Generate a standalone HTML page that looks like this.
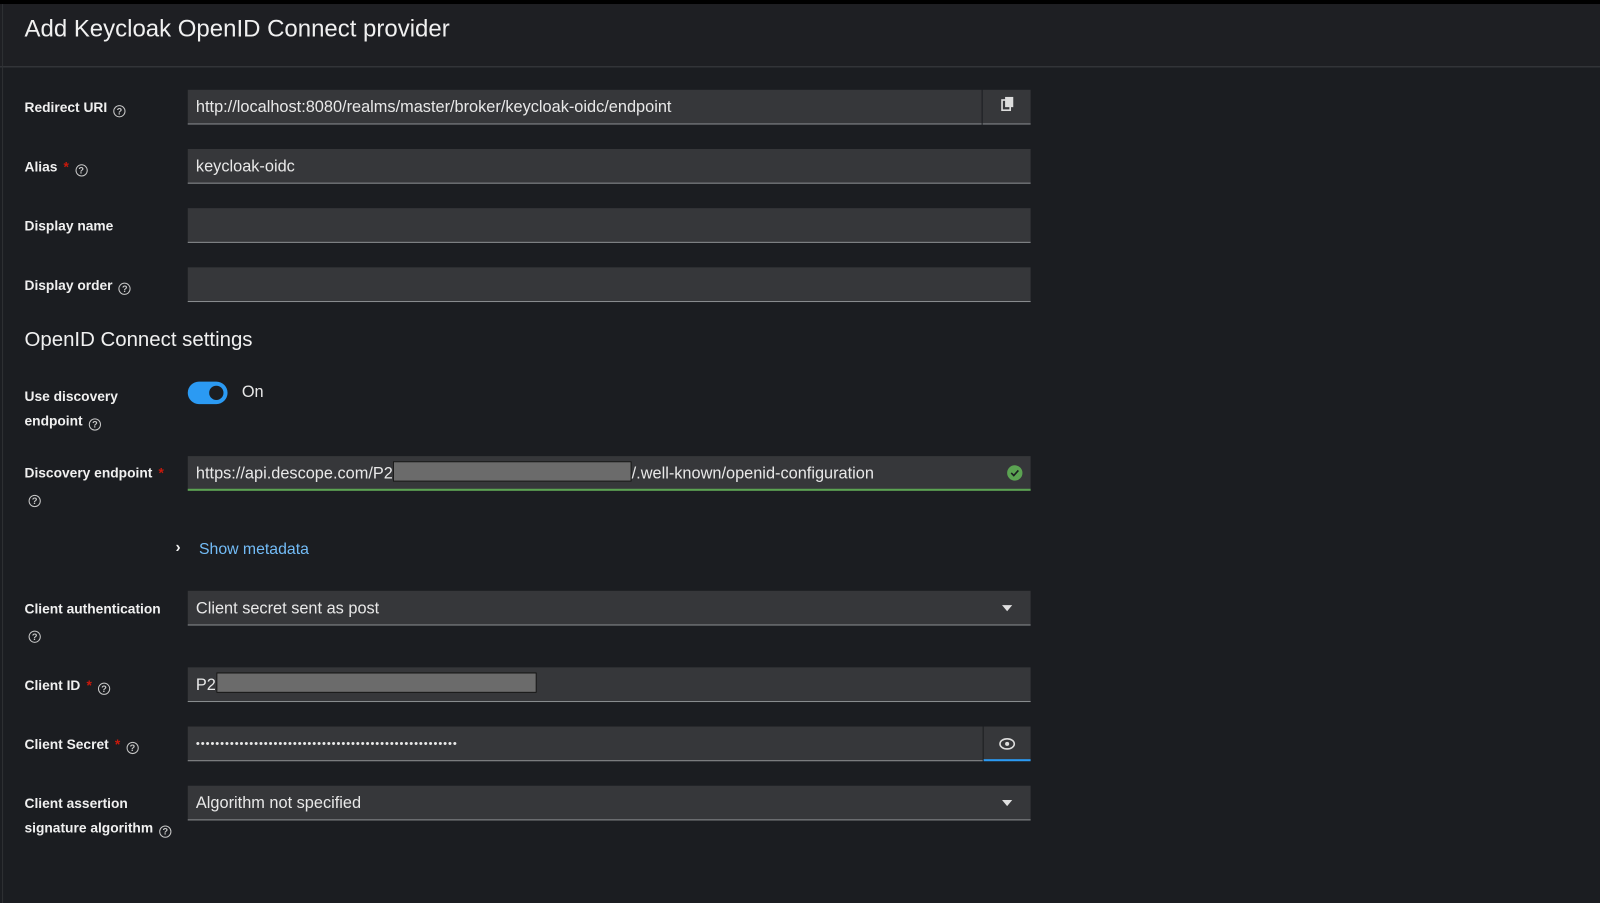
<!DOCTYPE html><html><head><style>
body{margin:0;width:1600px;height:885px;background:#1b1d21;font-family:"Liberation Sans",sans-serif;color:#e0e0e0;position:relative;overflow:hidden}
#w{position:absolute;left:0;top:0;width:1568px;height:868px;transform:scale(1.0204);transform-origin:0 0}
.top{position:absolute;left:0;top:0;width:1600px;height:4px;background:#000}
.hdr{position:absolute;left:0;top:4px;width:1600px;height:61px;background:#1e1f23;border-bottom:1px solid #3c3f42}
.hdr h1{margin:0;position:absolute;left:24px;top:11px;font-size:23.5px;font-weight:normal;color:#f0f0f0}
.lbl{position:absolute;left:24px;font-size:13.5px;font-weight:bold;color:#f0f0f0;line-height:24px}
.req{color:#c9190b;margin-left:6px}
.q{display:inline-block;width:10px;height:10px;border:1.5px solid #c8c8c8;border-radius:50%;font-size:9px;line-height:10px;text-align:center;color:#c8c8c8;margin-left:6px;vertical-align:-2px;font-weight:bold}
.in{position:absolute;left:184px;width:826px;height:34px;background:#36373a;border-bottom:1px solid #8a8d90;font-size:16px;line-height:35px;color:#e8e8e8;box-sizing:border-box;padding-left:8px}
.red{display:inline-block;background:#6b6b6b;border:1px solid #111;height:18px;vertical-align:-3px}
.arr{position:absolute;right:18px;top:14px;width:0;height:0;border-left:5px solid transparent;border-right:5px solid transparent;border-top:6px solid #e0e0e0}
</style></head><body>
<div class="top"></div>
<div id="w">
<div class="hdr"><h1>Add Keycloak OpenID Connect provider</h1></div>
<div style="position:absolute;left:2px;top:4px;width:1px;height:881px;background:#2e3034"></div>

<div class="lbl" style="top:94px">Redirect URI<span class="q">?</span></div>
<div class="in" style="top:88px;width:778px">http://localhost:8080/realms/master/broker/keycloak-oidc/endpoint</div>
<div style="position:absolute;left:963px;top:88px;width:47px;height:34px;background:#36373a;border-bottom:1px solid #8a8d90;box-sizing:border-box"><svg width="47" height="33"><rect x="19" y="10" width="8" height="10" fill="none" stroke="#ddd" stroke-width="1.6"/><rect x="22" y="7" width="8" height="10" fill="#ddd"/></svg></div>

<div class="lbl" style="top:152px">Alias<span class="req">*</span><span class="q">?</span></div>
<div class="in" style="top:146px">keycloak-oidc</div>

<div class="lbl" style="top:210px">Display name</div>
<div class="in" style="top:204px"></div>

<div class="lbl" style="top:268px">Display order<span class="q">?</span></div>
<div class="in" style="top:262px"></div>

<div style="position:absolute;left:24px;top:322px;font-size:20px;color:#f0f0f0">OpenID Connect settings</div>

<div class="lbl" style="top:377px">Use discovery<br>endpoint<span class="q">?</span></div>
<div style="position:absolute;left:184px;top:374px;width:39px;height:22px;border-radius:11px;background:#2b9af3"><div style="position:absolute;right:4px;top:4px;width:14px;height:14px;border-radius:50%;background:#1b1d21"></div></div>
<div style="position:absolute;left:237px;top:376px;font-size:16px;color:#e8e8e8">On</div>

<div class="lbl" style="top:452px">Discovery endpoint<span class="req">*</span><br><span class="q" style="margin-left:4px">?</span></div>
<div class="in" style="top:447px;border-bottom:2px solid #5ba352">https://api.descope.com/P2<span class="red" style="width:232px"></span>/.well-known/openid-configuration
<div style="position:absolute;right:8px;top:9px;width:15px;height:15px;border-radius:50%;background:#5ba352"><svg width="15" height="15" style="display:block"><path d="M4 7.5l2.5 2.5 4.5-5" stroke="#1b1d21" stroke-width="1.6" fill="none"/></svg></div></div>

<div style="position:absolute;left:172px;top:528px;font-size:15px;color:#f0f0f0;font-weight:bold">›</div>
<div style="position:absolute;left:195px;top:530px;font-size:15.5px;color:#73bcf7">Show metadata</div>

<div class="lbl" style="top:585px">Client authentication<br><span class="q" style="margin-left:4px">?</span></div>
<div class="in" style="top:579px">Client secret sent as post<div class="arr"></div></div>

<div class="lbl" style="top:660px">Client ID<span class="req">*</span><span class="q">?</span></div>
<div class="in" style="top:654px">P2<span class="red" style="width:312px"></span></div>

<div class="lbl" style="top:718px">Client Secret<span class="req">*</span><span class="q">?</span></div>
<div class="in" style="top:712px;width:779px;font-size:11px;letter-spacing:0.9px">••••••••••••••••••••••••••••••••••••••••••••••••••••••</div>
<div style="position:absolute;left:964px;top:712px;width:46px;height:34px;background:#36373a;border-bottom:2px solid #2b9af3;box-sizing:border-box"><svg width="46" height="32"><ellipse cx="23" cy="17" rx="7" ry="5" fill="none" stroke="#ddd" stroke-width="1.6"/><circle cx="23" cy="17" r="2" fill="#ddd"/></svg></div>

<div class="lbl" style="top:776px">Client assertion<br>signature algorithm<span class="q">?</span></div>
<div class="in" style="top:770px">Algorithm not specified<div class="arr"></div></div>
</div>
</body></html>
